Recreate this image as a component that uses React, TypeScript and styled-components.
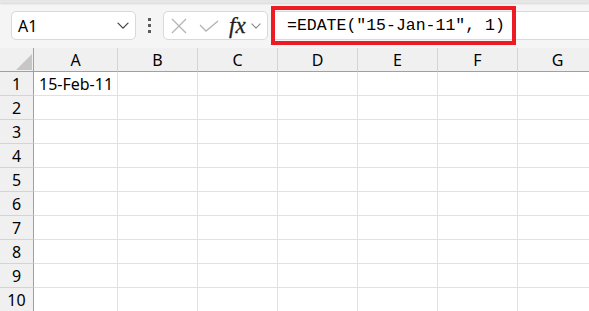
import React from 'react'
import styled, { createGlobalStyle } from 'styled-components'

const GlobalStyle = createGlobalStyle`
  html, body {
    margin: 0;
    padding: 0;
    background: #ffffff;
    overflow: hidden;
  }
`

const uiFont = `"Noto Sans", "Open Sans", "Liberation Sans", sans-serif`

const Sheet = styled.div`
  width: 589px;
  height: 311px;
  overflow: hidden;
  font-family: ${uiFont};
  color: #000;
  background: #fff;
`

const TopEdge = styled.div`
  height: 3px;
  background: #e6e6e6;
  box-shadow: 0 1px 2px rgba(0, 0, 0, 0.12);
  position: relative;
  z-index: 1;
`

const FormulaBar = styled.div`
  height: 45px;
  display: flex;
  align-items: center;
  background: #f5f5f5;
  padding-left: 11px;
`

const Box = styled.div`
  height: 29px;
  box-sizing: border-box;
  background: #fff;
  border: 1px solid #d9d9d9;
  border-radius: 5px;
  display: flex;
  align-items: center;
`

const NameBox = styled(Box)`
  width: 125px;
  padding: 0 6px 0 6px;
  justify-content: space-between;
  font-size: 16px;
`

const Grip = styled.div`
  width: 3px;
  margin: 0 12px 0 12px;
  display: flex;
  flex-direction: column;
  gap: 3px;

  span {
    width: 3px;
    height: 3px;
    background: #5c5c5c;
  }
`

const ActionBox = styled(Box)`
  width: 105px;
  padding-left: 6px;
`

const FxLabel = styled.span`
  font-family: "Liberation Serif", "DejaVu Serif", serif;
  font-style: italic;
  font-size: 23px;
  color: #1e1e1e;
  margin-left: 10px;
  line-height: 1;
  -webkit-text-stroke: 0.3px #1e1e1e;
`

const FxChevron = styled.span`
  margin-left: 5px;
  display: flex;
`

const FormulaInput = styled.div`
  flex: 1;
  height: 29px;
  margin-left: 3px;
  box-sizing: border-box;
  background: #fff;
  border: 1px solid #d9d9d9;
  border-right: none;
  border-radius: 5px 0 0 5px;
  position: relative;
  display: flex;
  align-items: center;
  padding-left: 15px;
`

const FormulaText = styled.span`
  font-family: "Liberation Mono", "DejaVu Sans Mono", monospace;
  font-size: 16.5px;
  white-space: pre;
`

const Highlight = styled.div`
  position: absolute;
  left: -1px;
  top: -6px;
  width: 245px;
  height: 39px;
  box-sizing: border-box;
  border: 4px solid #ed1c24;
`

const Grid = styled.div`
  display: grid;
  grid-template-columns: 34px 84px repeat(6, 80px);
  grid-auto-rows: 24px;
`

const HeaderCell = styled.div<{ $corner?: boolean }>`
  box-sizing: border-box;
  background: #f0f0f0;
  border-right: 1px solid ${({ $corner }) => ($corner ? '#a0a0a0' : '#d4d4d4')};
  border-bottom: 1px solid #a0a0a0;
  display: flex;
  align-items: center;
  justify-content: center;
  font-size: 16px;
  position: relative;
`

const Corner = styled.div`
  position: absolute;
  right: 1px;
  bottom: 1px;
  width: 0;
  height: 0;
  border-left: 16px solid transparent;
  border-bottom: 16px solid #c6c6c6;
`

const RowHead = styled.div`
  box-sizing: border-box;
  background: #f0f0f0;
  border-right: 1px solid #a0a0a0;
  border-bottom: 1px solid #d4d4d4;
  display: flex;
  align-items: center;
  justify-content: center;
  font-size: 16px;
`

const Cell = styled.div`
  box-sizing: border-box;
  border-right: 1px solid #e1e1e1;
  border-bottom: 1px solid #e1e1e1;
  display: flex;
  align-items: center;
  padding-left: 5px;
  font-size: 16px;
  white-space: nowrap;
`

const Chevron = ({ size = 12, color = '#444' }: { size?: number; color?: string }) => (
  <svg width={size} height={size * 0.6} viewBox="0 0 12 7" fill="none">
    <path d="M1 1l5 5 5-5" stroke={color} strokeWidth="1.3" strokeLinecap="round" strokeLinejoin="round" />
  </svg>
)

const CancelIcon = () => (
  <svg width="18" height="16" viewBox="0 0 18 16" fill="none">
    <path d="M2 1l14 14M16 1L2 15" stroke="#b4b4b4" strokeWidth="1.3" />
  </svg>
)

const EnterIcon = () => (
  <svg width="20" height="12" viewBox="0 0 20 12" fill="none" style={{ marginLeft: 11 }}>
    <path d="M1 5l6 6L19 1" stroke="#b4b4b4" strokeWidth="1.3" />
  </svg>
)

const columns = ['A', 'B', 'C', 'D', 'E', 'F', 'G']
const rows = Array.from({ length: 10 }, (_, i) => i + 1)
const values: Record<string, string> = { A1: '15-Feb-11' }

export default function App() {
  return (
    <Sheet>
      <GlobalStyle />
      <TopEdge />
      <FormulaBar>
        <NameBox>
          <span>A1</span>
          <Chevron />
        </NameBox>
        <Grip>
          <span />
          <span />
          <span />
        </Grip>
        <ActionBox>
          <CancelIcon />
          <EnterIcon />
          <FxLabel>fx</FxLabel>
          <FxChevron>
            <Chevron size={10} color="#888" />
          </FxChevron>
        </ActionBox>
        <FormulaInput>
          <FormulaText>=EDATE("15-Jan-11", 1)</FormulaText>
          <Highlight />
        </FormulaInput>
      </FormulaBar>
      <Grid>
        <HeaderCell $corner>
          <Corner />
        </HeaderCell>
        {columns.map((c) => (
          <HeaderCell key={c}>{c}</HeaderCell>
        ))}
        {rows.map((r) => (
          <React.Fragment key={r}>
            <RowHead>{r}</RowHead>
            {columns.map((c) => (
              <Cell key={c + r}>{values[c + r] ?? ''}</Cell>
            ))}
          </React.Fragment>
        ))}
      </Grid>
    </Sheet>
  )
}
